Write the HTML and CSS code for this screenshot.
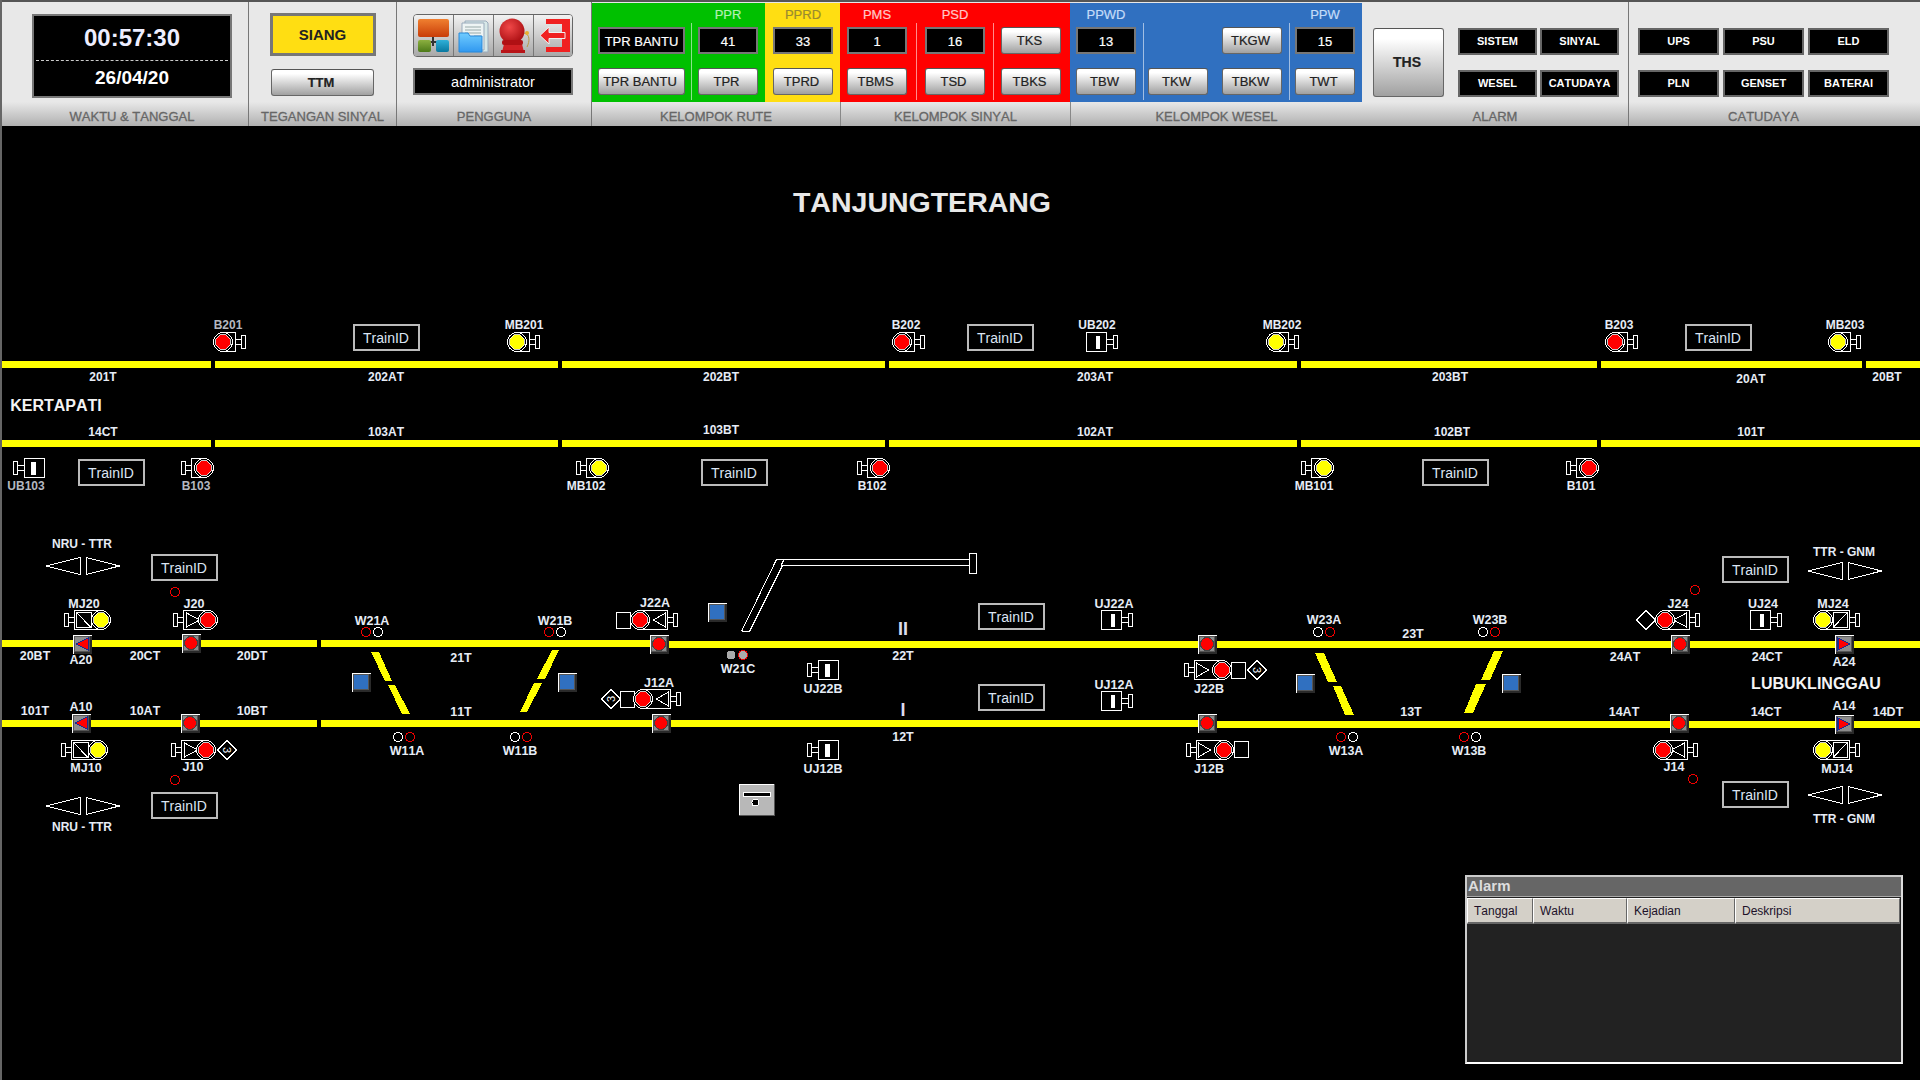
FILE: index.html
```html
<!DOCTYPE html>
<html lang="en">
  <head>
    <title>Tanjungterang</title>
    <meta charset="utf-8">
    <link rel="stylesheet" href="styles.css">
  </head>
  <body>
    <div class="screen">
      <div class="toolbar">

        <div class="panel p-waktu">
          <div class="panel-body">
            <div class="clock">
              <div class="clock-time">00:57:30</div>
              <div class="clock-date">26/04/20</div>
            </div>
          </div>
          <div class="panel-label">WAKTU &amp; TANGGAL</div>
        </div>

        <div class="panel p-tegangan">
          <div class="panel-body">
            <div class="siang">SIANG</div>
            <div class="btn btn-ttm">TTM</div>
          </div>
          <div class="panel-label">TEGANGAN SINYAL</div>
        </div>

        <div class="panel p-pengguna">
          <div class="panel-body">
            <div class="icons">
              <div class="icon-cell">
                <svg width="40" height="43" viewBox="0 0 40 43">
                  <defs>
                    <linearGradient id="org" x1="0" y1="0" x2="0" y2="1"><stop offset="0" stop-color="#f08030"/><stop offset="1" stop-color="#c83c08"/></linearGradient>
                    <linearGradient id="grn" x1="0" y1="0" x2="0" y2="1"><stop offset="0" stop-color="#8cb040"/><stop offset="1" stop-color="#4c7a18"/></linearGradient>
                    <linearGradient id="tea" x1="0" y1="0" x2="0" y2="1"><stop offset="0" stop-color="#30b0d8"/><stop offset="1" stop-color="#0878a0"/></linearGradient>
                    <linearGradient id="blu" x1="0" y1="0" x2="0" y2="1"><stop offset="0" stop-color="#70ccff"/><stop offset="1" stop-color="#3098f0"/></linearGradient>
                    <radialGradient id="bel" cx=".4" cy=".35" r=".7"><stop offset="0" stop-color="#f04848"/><stop offset="1" stop-color="#a80c10"/></radialGradient>
                  </defs>
                  <path d="M19 21v11M11 28h17" stroke="#333" stroke-width="2" fill="none"/>
                  <rect x="4" y="5" width="31" height="18" rx="2" fill="url(#org)"/>
                  <rect x="4" y="26" width="13" height="12" rx="2" fill="url(#grn)"/>
                  <rect x="22" y="26" width="13" height="12" rx="2" fill="url(#tea)"/>
                </svg>
              </div>
              <div class="icon-cell">
                <svg width="40" height="43" viewBox="0 0 40 43">
                  <path d="M11 7h21l2 2v29H11z" fill="#d8e8e8" stroke="#9ab" stroke-width="1"/>
                  <path d="M8 9h22v27H8z" fill="#eef4f4" stroke="#9ab" stroke-width="1"/>
                  <path d="M11 13h16M11 16h16M11 19h16M20 22h7" stroke="#9aa" stroke-width="1"/>
                  <path d="M5 19h9l2 3h12v16H5z" fill="url(#blu)" stroke="#2888d8" stroke-width="1"/>
                </svg>
              </div>
              <div class="icon-cell">
                <svg width="40" height="43" viewBox="0 0 40 43">
                  <path d="M30 19c6 1 6 8 3 14" fill="none" stroke="#b89840" stroke-width="1"/>
                  <circle cx="33" cy="19" r="2" fill="#e8b030"/>
                  <path d="M8 38l2-8h18l2 8z" fill="#d02024"/>
                  <rect x="7" y="36" width="24" height="3" fill="#b81418"/>
                  <circle cx="18" cy="17" r="12.5" fill="url(#bel)"/>
                  <rect x="8" y="26" width="21" height="5" rx="2" fill="#b01014"/>
                </svg>
              </div>
              <div class="icon-cell">
                <svg width="40" height="43" viewBox="0 0 40 43">
                  <path d="M12 5H36V38H12V33H28V10H12Z" fill="#f02020"/>
                  <path d="M6 21.5L15 13V18.5H31V24.5H15V30Z" fill="#f02020" stroke="#f0f0f0" stroke-width="1"/>
                </svg>
              </div>
            </div>
            <div class="box box-user">administrator</div>
          </div>
          <div class="panel-label">PENGGUNA</div>
        </div>

        <div class="panel p-rute">
          <div class="panel-body cells">
            <div class="cell green">
              <div class="col col-wide">
                <div class="col-title"></div>
                <div class="box">TPR BANTU</div>
                <div class="btn">TPR BANTU</div>
              </div>
              <div class="sep sep-6"></div>
              <div class="col">
                <div class="col-title t-green">PPR</div>
                <div class="box">41</div>
                <div class="btn">TPR</div>
              </div>
            </div>
            <div class="cell yellow">
              <div class="col">
                <div class="col-title t-gold">PPRD</div>
                <div class="box">33</div>
                <div class="btn">TPRD</div>
              </div>
            </div>
          </div>
          <div class="panel-label">KELOMPOK RUTE</div>
        </div>

        <div class="panel p-sinyal">
          <div class="panel-body cells">
            <div class="cell red">
              <div class="col">
                <div class="col-title t-red">PMS</div>
                <div class="box">1</div>
                <div class="btn">TBMS</div>
              </div>
              <div class="sep sep-a"></div>
              <div class="col">
                <div class="col-title t-red">PSD</div>
                <div class="box">16</div>
                <div class="btn">TSD</div>
              </div>
              <div class="sep sep-b"></div>
              <div class="col">
                <div class="col-title"></div>
                <div class="btn">TKS</div>
                <div class="btn">TBKS</div>
              </div>
            </div>
          </div>
          <div class="panel-label">KELOMPOK SINYAL</div>
        </div>

        <div class="panel p-wesel">
          <div class="panel-body cells">
            <div class="cell blue">
              <div class="col">
                <div class="col-title t-blue">PPWD</div>
                <div class="box">13</div>
                <div class="btn">TBW</div>
              </div>
              <div class="sep sep-c"></div>
              <div class="col">
                <div class="col-title"></div>
                <div class="col-blank"></div>
                <div class="btn">TKW</div>
              </div>
              <div class="col col-gap">
                <div class="col-title"></div>
                <div class="btn">TKGW</div>
                <div class="btn">TBKW</div>
              </div>
              <div class="sep sep-d"></div>
              <div class="col">
                <div class="col-title t-blue">PPW</div>
                <div class="box">15</div>
                <div class="btn">TWT</div>
              </div>
            </div>
          </div>
          <div class="panel-label">KELOMPOK WESEL</div>
        </div>

        <div class="panel p-alarm">
          <div class="panel-body">
            <div class="btn btn-ths">THS</div>
            <div class="status-grid">
              <div class="status">SISTEM</div>
              <div class="status">SINYAL</div>
              <div class="status">WESEL</div>
              <div class="status">CATUDAYA</div>
            </div>
          </div>
          <div class="panel-label">ALARM</div>
        </div>

        <div class="panel p-catu">
          <div class="panel-body">
            <div class="status-grid">
              <div class="status">UPS</div>
              <div class="status">PSU</div>
              <div class="status">ELD</div>
              <div class="status">PLN</div>
              <div class="status">GENSET</div>
              <div class="status">BATERAI</div>
            </div>
          </div>
          <div class="panel-label">CATUDAYA</div>
        </div>
      </div>

      <div class="stage">
        <svg class="diagram" width="1918" height="954" viewBox="2 126 1918 954">
          <defs>
            <g id="head">
              <circle r="9.5" class="ring"/>
              <circle r="7.5" class="lamp"/>
            </g>
            <g id="sig-block">
              <rect x="-12.5" y="-9.5" width="12" height="19" class="line"/>
              <path d="M-18.5 -2.5H-12.5M-18.5 2.5H-12.5" class="line"/>
              <rect x="-22.5" y="-6.5" width="4" height="13" class="line"/>
              <use href="#head"/>
            </g>
            <g id="sig-tri">
              <rect x="-24.5" y="-9.5" width="24" height="19" class="line"/>
              <path d="M-21.5 -7L-8.5 0L-21.5 7Z" class="line"/>
              <path d="M-30.5 -2.5H-24.5M-30.5 2.5H-24.5" class="line"/>
              <rect x="-34.5" y="-6.5" width="4" height="13" class="line"/>
              <use href="#head"/>
            </g>
            <g id="sig-long">
              <rect x="-27.5" y="-9.5" width="27" height="19" class="line"/>
              <path d="M-25.5 -7L-13.5 0L-25.5 7Z" class="line"/>
              <path d="M-33.5 -2.5H-27.5M-33.5 2.5H-27.5" class="line"/>
              <rect x="-37.5" y="-6.5" width="4" height="13" class="line"/>
              <use href="#head"/>
            </g>
            <g id="sig-mj">
              <rect x="-26.5" y="-9.5" width="26" height="19" class="line"/>
              <rect x="-24.5" y="-7.5" width="14.5" height="15" class="line"/>
              <path d="M-24.5 -7.5L-10 7.5" class="line"/>
              <path d="M-32.5 -2.5H-26.5M-32.5 2.5H-26.5" class="line"/>
              <rect x="-36.5" y="-6.5" width="4" height="13" class="line"/>
              <use href="#head"/>
            </g>
            <g id="uj">
              <rect x="0.5" y="-9.5" width="20" height="19" class="line"/>
              <rect x="7" y="-6.5" width="4.5" height="13" class="solid"/>
              <path d="M-6.5 -2.5H0.5M-6.5 2.5H0.5" class="line"/>
              <rect x="-10.5" y="-6.5" width="4" height="13" class="line"/>
            </g>
            <g id="dia"><path d="M0 -9.5L9.5 0L0 9.5L-9.5 0Z" class="line"/></g>
            <g id="arrows">
              <path d="M-37 0L-3 -8.5V8.5Z" class="line"/>
              <path d="M3 -8.5L36.5 0L3 8.5Z" class="line"/>
            </g>
            <g id="bevel">
              <rect width="19" height="19" class="bv-hi"/>
              <rect x="1" y="1" width="18" height="18" class="bv-lo"/>
              <rect x="1" y="1" width="16" height="16" class="bv-edge"/>
              <rect x="2" y="2" width="14" height="14" class="bv-fill"/>
            </g>
            <g id="sw-red" class="bv-gray">
              <use href="#bevel"/>
              <circle cx="9" cy="9" r="6.5" class="sw-lamp"/>
            </g>
            <g id="sw-left" class="bv-gray">
              <use href="#bevel"/>
              <path d="M3 9L15 3V15Z" class="sw-tri"/>
              <path d="M15.5 2V16" class="sw-bar"/>
            </g>
            <g id="sw-right" class="bv-gray">
              <use href="#bevel"/>
              <path d="M15 9L3 3V15Z" class="sw-tri"/>
              <path d="M2.5 2V16" class="sw-bar"/>
            </g>
            <g id="blue-sq" class="bv-blue">
              <use href="#bevel"/>
            </g>
          </defs>

          <text x="922" y="202" class="title">TANJUNGTERANG</text>

          <!-- upper block tracks -->
          <rect x="2" y="361" width="209" height="7" class="track"/>
          <rect x="215" y="361" width="343" height="7" class="track"/>
          <rect x="562" y="361" width="323" height="7" class="track"/>
          <rect x="889" y="361" width="408" height="7" class="track"/>
          <rect x="1301" y="361" width="296" height="7" class="track"/>
          <rect x="1601" y="361" width="261" height="7" class="track"/>
          <rect x="1866" y="361" width="54" height="7" class="track"/>
          <rect x="2" y="440" width="209" height="7" class="track"/>
          <rect x="215" y="440" width="343" height="7" class="track"/>
          <rect x="562" y="440" width="323" height="7" class="track"/>
          <rect x="889" y="440" width="408" height="7" class="track"/>
          <rect x="1301" y="440" width="296" height="7" class="track"/>
          <rect x="1601" y="440" width="319" height="7" class="track"/>

          <!-- station tracks -->
          <rect x="2" y="640" width="315" height="7" class="track"/>
          <rect x="321" y="640" width="330" height="7" class="track"/>
          <rect x="651" y="641" width="1269" height="7" class="track"/>
          <rect x="2" y="720" width="315" height="7" class="track"/>
          <rect x="321" y="720" width="878" height="7" class="track"/>
          <rect x="1199" y="721" width="721" height="7" class="track"/>

          <!-- crossovers -->
          <path d="M371 652H379L392 681H385ZM388 685H395L410 714H402Z" class="track"/>
          <path d="M552 650H559L545 679H537ZM534 683H542L527 712H520Z" class="track"/>
          <path d="M1315 653H1324L1337 682H1328ZM1333 686H1341L1354 715H1345Z" class="track"/>
          <path d="M1494 651H1503L1490 680H1481ZM1476 684H1486L1473 713H1464Z" class="track"/>

          <!-- siding -->
          <path d="M741.5 631.5L776.5 559.5H969.5M749.5 631.5L782.5 565.5H969.5M741.5 631.5H749.5M784 559.5L781 565.5" class="line"/>
          <rect x="969.5" y="553.5" width="7" height="20" class="line"/>

          <!-- upper block equipment -->
          <use href="#sig-block" transform="translate(223 342) scale(-1 1)" class="c-red"/>
          <use href="#sig-block" transform="translate(517 342) scale(-1 1)" class="c-yel"/>
          <use href="#sig-block" transform="translate(902 342) scale(-1 1)" class="c-red"/>
          <use href="#uj" transform="translate(1107 342) scale(-1 1)"/>
          <use href="#sig-block" transform="translate(1276 342) scale(-1 1)" class="c-yel"/>
          <use href="#sig-block" transform="translate(1615 342) scale(-1 1)" class="c-red"/>
          <use href="#sig-block" transform="translate(1838 342) scale(-1 1)" class="c-yel"/>
          <use href="#uj" transform="translate(24 468)"/>
          <use href="#sig-block" transform="translate(204 468)" class="c-red"/>
          <use href="#sig-block" transform="translate(599 468)" class="c-yel"/>
          <use href="#sig-block" transform="translate(880 468)" class="c-red"/>
          <use href="#sig-block" transform="translate(1324 468)" class="c-yel"/>
          <use href="#sig-block" transform="translate(1589 468)" class="c-red"/>

          <text x="228" y="325" class="lbl dim">B201</text>
          <text x="524" y="325" class="lbl">MB201</text>
          <text x="906" y="325" class="lbl">B202</text>
          <text x="1097" y="325" class="lbl">UB202</text>
          <text x="1282" y="325" class="lbl">MB202</text>
          <text x="1619" y="325" class="lbl">B203</text>
          <text x="1845" y="325" class="lbl">MB203</text>
          <text x="26" y="486" class="lbl dim">UB103</text>
          <text x="196" y="486" class="lbl dim">B103</text>
          <text x="586" y="486" class="lbl">MB102</text>
          <text x="872" y="486" class="lbl">B102</text>
          <text x="1314" y="486" class="lbl">MB101</text>
          <text x="1581" y="486" class="lbl">B101</text>

          <text x="103" y="377" class="lbl">201T</text>
          <text x="386" y="377" class="lbl">202AT</text>
          <text x="721" y="377" class="lbl">202BT</text>
          <text x="1095" y="377" class="lbl">203AT</text>
          <text x="1450" y="377" class="lbl">203BT</text>
          <text x="1751" y="379" class="lbl">20AT</text>
          <text x="1887" y="377" class="lbl">20BT</text>
          <text x="103" y="432" class="lbl">14CT</text>
          <text x="386" y="432" class="lbl">103AT</text>
          <text x="721" y="430" class="lbl">103BT</text>
          <text x="1095" y="432" class="lbl">102AT</text>
          <text x="1452" y="432" class="lbl">102BT</text>
          <text x="1751" y="432" class="lbl">101T</text>

          <text x="56" y="405" class="station">KERTAPATI</text>
          <text x="1816" y="683" class="station">LUBUKLINGGAU</text>

          <!-- train id boxes -->
          <rect x="354" y="325" width="65" height="25" class="tid"/><text x="386" y="338" class="tid-text">TrainID</text>
          <rect x="968" y="325" width="65" height="25" class="tid"/><text x="1000" y="338" class="tid-text">TrainID</text>
          <rect x="1686" y="325" width="65" height="25" class="tid"/><text x="1718" y="338" class="tid-text">TrainID</text>
          <rect x="79" y="460" width="65" height="25" class="tid"/><text x="111" y="473" class="tid-text">TrainID</text>
          <rect x="702" y="460" width="65" height="25" class="tid"/><text x="734" y="473" class="tid-text">TrainID</text>
          <rect x="1423" y="460" width="65" height="25" class="tid"/><text x="1455" y="473" class="tid-text">TrainID</text>
          <rect x="152" y="555" width="65" height="25" class="tid"/><text x="184" y="568" class="tid-text">TrainID</text>
          <rect x="152" y="793" width="65" height="25" class="tid"/><text x="184" y="806" class="tid-text">TrainID</text>
          <rect x="979" y="604" width="65" height="25" class="tid"/><text x="1011" y="617" class="tid-text">TrainID</text>
          <rect x="979" y="685" width="65" height="25" class="tid"/><text x="1011" y="698" class="tid-text">TrainID</text>
          <rect x="1723" y="557" width="65" height="25" class="tid"/><text x="1755" y="570" class="tid-text">TrainID</text>
          <rect x="1723" y="782" width="65" height="25" class="tid"/><text x="1755" y="795" class="tid-text">TrainID</text>

          <!-- west end -->
          <text x="82" y="544" class="lbl">NRU - TTR</text>
          <use href="#arrows" transform="translate(83 566)"/>
          <circle cx="175" cy="592" r="4.5" class="ind-red"/>
          <text x="84" y="604" class="lbl lg">MJ20</text>
          <text x="194" y="604" class="lbl lg">J20</text>
          <use href="#sig-mj" transform="translate(101 620)" class="c-yel"/>
          <use href="#sig-tri" transform="translate(208 620)" class="c-red"/>
          <use href="#sw-left" x="73" y="635"/>
          <use href="#sw-red" x="182" y="634"/>
          <text x="35" y="656" class="lbl lg">20BT</text>
          <text x="81" y="660" class="lbl lg">A20</text>
          <text x="145" y="656" class="lbl lg">20CT</text>
          <text x="252" y="656" class="lbl lg">20DT</text>
          <text x="35" y="711" class="lbl lg">101T</text>
          <text x="81" y="707" class="lbl lg">A10</text>
          <text x="145" y="711" class="lbl lg">10AT</text>
          <text x="252" y="711" class="lbl lg">10BT</text>
          <use href="#sw-left" x="72" y="714"/>
          <use href="#sw-red" x="181" y="714"/>
          <use href="#sig-mj" transform="translate(98 750)" class="c-yel"/>
          <use href="#sig-tri" transform="translate(206 750)" class="c-red"/>
          <use href="#dia" x="227" y="750"/>
          <text transform="translate(227 750) rotate(90)" class="tiny">3</text>
          <text x="86" y="768" class="lbl lg">MJ10</text>
          <text x="193" y="767" class="lbl lg">J10</text>
          <circle cx="175" cy="780" r="4.5" class="ind-red"/>
          <use href="#arrows" transform="translate(83 806)"/>
          <text x="82" y="827" class="lbl">NRU - TTR</text>

          <!-- points 21 / 11 -->
          <text x="372" y="621" class="lbl lg">W21A</text>
          <circle cx="366" cy="632" r="4.5" class="ind-red"/>
          <circle cx="378" cy="632" r="4.5" class="ind-white"/>
          <use href="#blue-sq" x="352" y="673"/>
          <text x="461" y="658" class="lbl lg">21T</text>
          <text x="461" y="712" class="lbl lg">11T</text>
          <circle cx="398" cy="737" r="4.5" class="ind-white"/>
          <circle cx="410" cy="737" r="4.5" class="ind-red"/>
          <text x="407" y="751" class="lbl lg">W11A</text>
          <text x="555" y="621" class="lbl lg">W21B</text>
          <circle cx="549" cy="632" r="4.5" class="ind-red"/>
          <circle cx="561" cy="632" r="4.5" class="ind-white"/>
          <use href="#blue-sq" x="558" y="673"/>
          <circle cx="515" cy="737" r="4.5" class="ind-white"/>
          <circle cx="527" cy="737" r="4.5" class="ind-red"/>
          <text x="520" y="751" class="lbl lg">W11B</text>

          <!-- J22A / J12A -->
          <text x="655" y="603" class="lbl lg">J22A</text>
          <use href="#sig-long" transform="translate(640 620) scale(-1 1)" class="c-red"/>
          <rect x="616.5" y="612.5" width="14" height="16" class="line"/>
          <use href="#sw-red" x="650" y="635"/>
          <use href="#blue-sq" x="708" y="603"/>
          <circle cx="731" cy="655" r="4.5" class="ind-gray"/>
          <circle cx="743" cy="655" r="4.5" class="ind-gray-red"/>
          <text x="738" y="669" class="lbl lg">W21C</text>
          <text x="659" y="683" class="lbl lg">J12A</text>
          <use href="#dia" x="611" y="699"/>
          <text transform="translate(611 699) rotate(-90)" class="tiny">3</text>
          <rect x="620.5" y="691.5" width="14" height="16" class="line"/>
          <use href="#sig-long" transform="translate(643 699) scale(-1 1)" class="c-red"/>
          <use href="#sw-red" x="652" y="714"/>

          <!-- block key -->
          <rect x="739" y="784" width="35" height="31" class="key"/>
          <path d="M739.5 815V784.5H774" class="line"/>
          <rect x="743" y="792" width="27" height="4" class="key-slot"/>
          <circle cx="755.5" cy="802.5" r="3.5" class="key-slot"/>

          <!-- platform -->
          <use href="#uj" transform="translate(818 670)"/>
          <text x="823" y="689" class="lbl lg">UJ22B</text>
          <use href="#uj" transform="translate(818 750)"/>
          <text x="823" y="769" class="lbl lg">UJ12B</text>
          <text x="903" y="629" class="roman">II</text>
          <text x="903" y="656" class="lbl lg">22T</text>
          <text x="903" y="710" class="roman">I</text>
          <text x="903" y="737" class="lbl lg">12T</text>
          <text x="1114" y="604" class="lbl lg">UJ22A</text>
          <use href="#uj" transform="translate(1122 620) scale(-1 1)"/>
          <text x="1114" y="685" class="lbl lg">UJ12A</text>
          <use href="#uj" transform="translate(1122 701) scale(-1 1)"/>

          <!-- J22B / J12B -->
          <use href="#sw-red" x="1198" y="635"/>
          <use href="#sig-long" transform="translate(1222 670)" class="c-red"/>
          <rect x="1231.5" y="662.5" width="14" height="16" class="line"/>
          <use href="#dia" x="1257" y="670"/>
          <text transform="translate(1257 670) rotate(90)" class="tiny">3</text>
          <text x="1209" y="689" class="lbl lg">J22B</text>
          <use href="#sw-red" x="1198" y="714"/>
          <use href="#sig-long" transform="translate(1224 750)" class="c-red"/>
          <rect x="1234.5" y="741.5" width="14" height="16" class="line"/>
          <text x="1209" y="769" class="lbl lg">J12B</text>

          <!-- points 23 / 13 -->
          <text x="1324" y="620" class="lbl lg">W23A</text>
          <circle cx="1318" cy="632" r="4.5" class="ind-white"/>
          <circle cx="1330" cy="632" r="4.5" class="ind-red"/>
          <use href="#blue-sq" x="1296" y="674"/>
          <text x="1413" y="634" class="lbl lg">23T</text>
          <text x="1411" y="712" class="lbl lg">13T</text>
          <circle cx="1341" cy="737" r="4.5" class="ind-red"/>
          <circle cx="1353" cy="737" r="4.5" class="ind-white"/>
          <text x="1346" y="751" class="lbl lg">W13A</text>
          <text x="1490" y="620" class="lbl lg">W23B</text>
          <circle cx="1483" cy="632" r="4.5" class="ind-white"/>
          <circle cx="1495" cy="632" r="4.5" class="ind-red"/>
          <use href="#blue-sq" x="1502" y="674"/>
          <circle cx="1464" cy="737" r="4.5" class="ind-red"/>
          <circle cx="1476" cy="737" r="4.5" class="ind-white"/>
          <text x="1469" y="751" class="lbl lg">W13B</text>

          <!-- east end -->
          <text x="1844" y="552" class="lbl">TTR - GNM</text>
          <use href="#arrows" transform="translate(1845 571)"/>
          <circle cx="1695" cy="590" r="4.5" class="ind-red"/>
          <text x="1678" y="604" class="lbl lg">J24</text>
          <use href="#dia" x="1646" y="620"/>
          <use href="#sig-tri" transform="translate(1665 620) scale(-1 1)" class="c-red"/>
          <text x="1763" y="604" class="lbl lg">UJ24</text>
          <use href="#uj" transform="translate(1771 620) scale(-1 1)"/>
          <text x="1833" y="604" class="lbl lg">MJ24</text>
          <use href="#sig-mj" transform="translate(1823 620) scale(-1 1)" class="c-yel"/>
          <use href="#sw-red" x="1671" y="635"/>
          <use href="#sw-right" x="1835" y="635"/>
          <text x="1625" y="657" class="lbl lg">24AT</text>
          <text x="1767" y="657" class="lbl lg">24CT</text>
          <text x="1844" y="662" class="lbl lg">A24</text>
          <text x="1844" y="706" class="lbl lg">A14</text>
          <text x="1624" y="712" class="lbl lg">14AT</text>
          <text x="1766" y="712" class="lbl lg">14CT</text>
          <text x="1888" y="712" class="lbl lg">14DT</text>
          <use href="#sw-red" x="1670" y="714"/>
          <use href="#sw-right" x="1835" y="715"/>
          <use href="#sig-tri" transform="translate(1663 750) scale(-1 1)" class="c-red"/>
          <text x="1674" y="767" class="lbl lg">J14</text>
          <use href="#sig-mj" transform="translate(1823 750) scale(-1 1)" class="c-yel"/>
          <text x="1837" y="769" class="lbl lg">MJ14</text>
          <circle cx="1693" cy="779" r="4.5" class="ind-red"/>
          <use href="#arrows" transform="translate(1845 795)"/>
          <text x="1844" y="819" class="lbl">TTR - GNM</text>
        </svg>

        <div class="alarm">
          <div class="alarm-title">Alarm</div>
          <div class="alarm-head">
            <div class="alarm-th th-tanggal">Tanggal</div>
            <div class="alarm-th th-waktu">Waktu</div>
            <div class="alarm-th th-kejadian">Kejadian</div>
            <div class="alarm-th th-deskripsi">Deskripsi</div>
          </div>
          <div class="alarm-body"></div>
        </div>
      </div>
    </div>
  </body>
</html>
```
FILE: styles.css
```css
* {
  box-sizing: border-box;
}

html, body {
  margin: 0;
  height: 100%;
  background: #000;
  overflow: hidden;
}

body {
  font-family: "Liberation Sans", Arial, sans-serif;
  font-kerning: none;
}

.screen {
  width: 1920px;
  height: 1080px;
  border-left: 2px solid #666;
  display: flex;
  flex-direction: column;
}

/* top toolbar */
.toolbar {
  display: flex;
  height: 126px;
  border-top: 2px solid #555;
  flex: none;
}

.panel {
  display: flex;
  flex-direction: column;
  border-right: 1px solid #777;
  background: #e8e8e8;
}
.p-waktu { width: 247px; }
.p-tegangan { width: 148px; }
.p-pengguna { width: 195px; }
.p-rute { width: 248px; }
.p-sinyal { width: 230px; }
.p-wesel { width: 292px; }
.p-alarm { width: 267px; }
.p-catu { width: 291px; border-right: 0; }
.p-rute, .p-sinyal, .p-wesel { border-right: 0; }

.panel-body {
  height: 100px;
  flex: none;
  display: flex;
}

.panel-label {
  height: 24px;
  line-height: 30px;
  text-align: center;
  font-size: 13px;
  color: #666;
  -webkit-text-stroke: .3px #666;
  background: linear-gradient(#e8e8e8, #b0b0b0);
}
.p-waktu .panel-label { padding-left: 14px; }
.p-catu .panel-label { padding-right: 22px; }
.p-sinyal .panel-label, .p-wesel .panel-label {
  border-left: 1px solid #888;
}

/* clock */
.p-waktu .panel-body { padding: 12px 0 0 30px; }
.clock {
  width: 200px;
  height: 84px;
  background: #000;
  border: 2px solid #777;
  color: #eef;
  text-align: center;
  font-weight: bold;
}
.clock-time {
  height: 45px;
  font-size: 24px;
  line-height: 44px;
  margin: 0 2px;
  border-bottom: 1px dashed #ccc;
}
.clock-date {
  font-size: 19px;
  line-height: 33px;
  color: #fff;
}

/* tegangan */
.p-tegangan .panel-body {
  flex-direction: column;
  align-items: center;
  padding-top: 11px;
}
.siang {
  width: 106px;
  height: 43px;
  background: #ffde12;
  border: 3px solid #777;
  font-size: 15px;
  font-weight: bold;
  color: #222;
  text-align: center;
  line-height: 37px;
  margin-bottom: 13px;
}
.btn-ttm {
  width: 103px;
  font-weight: bold;
  padding-right: 8px;
}

/* pengguna */
.p-pengguna .panel-body {
  flex-direction: column;
  padding: 12px 0 0 16px;
}
.icons {
  display: flex;
  width: 160px;
  height: 43px;
  border: 1px solid #666;
  border-radius: 4px;
  overflow: hidden;
  margin-bottom: 11px;
}
.icon-cell {
  width: 40px;
  background: linear-gradient(#f4f4f4, #a8a8a8);
  border-right: 1px solid #777;
  margin-top: -1px;
}
.icon-cell:last-child { border-right: 0; }

.box, .btn {
  height: 27px;
  font-size: 13px;
  line-height: 25px;
  text-align: center;
  white-space: nowrap;
  -webkit-text-stroke: .2px;
}
.box {
  background: #000;
  color: #fff;
  border: 2px solid #777;
}
.box-user {
  width: 160px;
  font-size: 14.5px;
  -webkit-text-stroke: 0;
}
.btn {
  color: #222;
  background: linear-gradient(#fff 15%, #a0a0a0);
  border: 1px solid #666;
  border-top-color: #555;
  border-radius: 3px;
  padding-right: 3px;
}

/* coloured groups */
.cells { padding-top: 1px; }
.cell {
  display: flex;
  height: 99px;
}
.green { width: 173px; padding-left: 6px; background: #00c000; }
.yellow { width: 75px; padding-left: 8px; background: #ffde12; }
.red { width: 230px; padding-left: 7px; background: #f00; }
.blue { width: 292px; padding-left: 6px; background: #3070c0; }

.col {
  width: 60px;
  display: flex;
  flex-direction: column;
  gap: 14px;
  flex: none;
}
.col-wide { width: 87px; }
.col-gap { margin-left: 14px; }
.col-title {
  height: 24px;
  margin-bottom: -14px;
  font-size: 13px;
  line-height: 24px;
  text-align: center;
  -webkit-text-stroke: .2px;
}
.col-blank { height: 27px; }
.t-green { color: #b4f0b4; }
.t-gold { color: #9a8a30; }
.t-red { color: #ffc8c8; }
.t-blue { color: #c4dcf8; }

.sep {
  width: 1px;
  margin-top: 20px;
  margin-bottom: 2px;
  background: rgba(255, 255, 255, .55);
  flex: none;
}
.sep-6 { margin-left: 6px; margin-right: 6px; }
.sep-a { margin-left: 9px; margin-right: 8px; }
.sep-b { margin-left: 8px; margin-right: 7px; }
.sep-c { margin-left: 7px; margin-right: 4px; }
.sep-d { margin-left: 7px; margin-right: 5px; }

/* alarm + catudaya */
.p-alarm .panel-body {
  padding: 26px 0 0 11px;
}
.btn-ths {
  width: 71px;
  height: 69px;
  font-size: 14px;
  font-weight: bold;
  line-height: 67px;
  margin-right: 14px;
}
.status-grid {
  display: grid;
  grid-template-columns: 79px 79px;
  grid-auto-rows: 27px;
  column-gap: 3px;
  row-gap: 15px;
}
.p-catu .panel-body { padding: 26px 0 0 9px; }
.p-catu .status-grid {
  grid-template-columns: 81px 81px 81px;
  column-gap: 4px;
}
.status {
  background: #000;
  border: 2px solid #666;
  color: #fff;
  font-size: 11px;
  font-weight: bold;
  line-height: 23px;
  text-align: center;
}

/* track diagram */
.stage {
  position: relative;
  flex: 1;
  background: #000;
}
.diagram {
  display: block;
  shape-rendering: crispEdges;
}
.diagram circle, .diagram path {
  shape-rendering: crispEdges;
}
.diagram text {
  font-family: "Liberation Sans", Arial, sans-serif;
  font-kerning: none;
  text-anchor: middle;
  dominant-baseline: central;
  fill: #e6ecf6;
}
.diagram .title {
  font-size: 28.5px;
  font-weight: bold;
  fill: #e8e8e8;
}
.diagram .station {
  font-size: 16px;
  font-weight: bold;
  fill: #f4f4f4;
}
.diagram .lbl {
  font-size: 12px;
  font-weight: bold;
}
.diagram .lg { font-size: 12.5px; }
.diagram .dim { fill: #b4b8c0; }
.diagram .roman {
  font-size: 18px;
  font-weight: bold;
  fill: #dde;
}
.diagram .tiny {
  font-size: 11px;
  fill: #fff;
}
.diagram .tid-text {
  font-size: 14px;
  fill: #dce6f4;
}
.tid {
  fill: none;
  stroke: #bbb;
  stroke-width: 2;
}
.track { fill: #ff0; }
.line {
  fill: none;
  stroke: #fff;
  stroke-width: 1;
}
.solid { fill: #fff; }
.ring {
  fill: #000;
  stroke: #fff;
  stroke-width: 1;
}
.lamp {
  fill: currentColor;
  stroke: #fff;
  stroke-width: .8;
}
.c-red { color: #f00; }
.c-yel { color: #ff0; }

.ind-red { fill: none; stroke: #e00; stroke-width: 1; }
.ind-white { fill: none; stroke: #fff; stroke-width: 1; }
.ind-gray { fill: #aaa; }
.ind-gray-red { fill: #aaa; stroke: #e00; stroke-width: 1; }

.bv-gray { color: #8c8c8c; }
.bv-blue { color: #3070c0; }
.bv-hi { fill: #fff; }
.bv-lo { fill: #2a2a2a; }
.bv-edge { fill: #555; }
.bv-fill { fill: currentColor; }
.sw-lamp { fill: #f00; stroke: #444; stroke-width: 1; }
.sw-tri { fill: #f00; stroke: #1a2a90; stroke-width: 1; }
.sw-bar { stroke: #1a2a90; stroke-width: 1; fill: none; }

.key { fill: #b8b8b8; stroke: #555; stroke-width: 1; }
.key-slot { fill: #000; stroke: #fff; stroke-width: 1; }

/* alarm window */
.alarm {
  position: absolute;
  left: 1463px;
  top: 749px;
  width: 438px;
  height: 189px;
  border: 2px solid #ccc;
  border-bottom-color: #fff;
  border-right-color: #ddd;
  background: #222;
  display: flex;
  flex-direction: column;
}
.alarm-title {
  height: 20px;
  background: #666;
  color: #ddd;
  font-size: 15px;
  font-weight: bold;
  line-height: 18px;
  padding-left: 1px;
  border-bottom: 1px solid #aaa;
}
.alarm-head {
  display: flex;
  height: 27px;
  padding: 1px 1px 0 0;
}
.alarm-th {
  background: #d4d0c8;
  border: 1px solid #fff;
  border-right-color: #666;
  border-bottom: 2px solid #666;
  color: #201028;
  font-size: 12px;
  line-height: 25px;
  padding-left: 6px;
}
.th-tanggal { width: 66px; }
.th-waktu { width: 94px; }
.th-kejadian { width: 108px; }
.th-deskripsi { flex: 1; }
.alarm-body { flex: 1; }
```
